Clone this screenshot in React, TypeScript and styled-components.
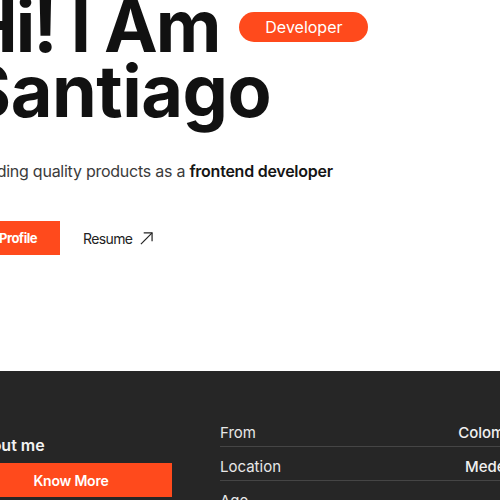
import * as React from "react";
import styled, { createGlobalStyle } from "styled-components";

const GlobalStyle = createGlobalStyle`
  html, body {
    margin: 0;
    padding: 0;
    background: #ffffff;
    overflow: hidden;
  }
  body {
    font-family: "Inter", "Noto Sans", sans-serif;
    color: #111111;
  }
`;

const ORANGE = "#ff4a1c";

// the screenshot is a crop of a wider page, so the page starts left of and above the window
const Page = styled.div`
  width: 560px;
  margin: -7px 0 0 -30px;
`;

const Hero = styled.section`
  display: flex;
  flex-direction: column;
  padding-bottom: 116px;
`;

const TitleRow = styled.div`
  display: flex;
  align-items: center;
  gap: 20px;
`;

const Title = styled.h1<{ $tight?: boolean }>`
  margin: 0 0 0 -6px;
  font-size: 72px;
  line-height: 65px;
  font-weight: 700;
  letter-spacing: ${(p) => (p.$tight ? "-2px" : "-0.5px")};
  color: #111111;
`;

const Badge = styled.span`
  display: inline-flex;
  align-items: center;
  justify-content: center;
  height: 30px;
  width: 129px;
  border-radius: 999px;
  background: ${ORANGE};
  color: #ffffff;
  font-size: 16px;
  font-weight: 400;
  margin-top: 2px;
`;

const Subtitle = styled.p`
  margin: 36px 0 0;
  font-size: 16px;
  line-height: 24px;
  letter-spacing: -0.25px;
  color: #3b3b3b;

  strong {
    font-weight: 600;
    color: #151515;
  }
`;

const Actions = styled.div`
  display: flex;
  align-items: center;
  gap: 23px;
  margin-top: 38px;
`;

const PrimaryButton = styled.button<{ $wide?: boolean }>`
  height: 34px;
  padding: ${(p) => (p.$wide ? "0" : "0 23px 0 29px")};
  border: none;
  background: ${ORANGE};
  color: #ffffff;
  font-family: inherit;
  font-size: ${(p) => (p.$wide ? "14px" : "13px")};
  font-weight: ${(p) => (p.$wide ? 600 : 700)};
  letter-spacing: ${(p) => (p.$wide ? "-0.2px" : "-0.5px")};
  cursor: pointer;
  width: ${(p) => (p.$wide ? "202px" : "auto")};
`;

const LinkButton = styled.a`
  display: inline-flex;
  align-items: center;
  gap: 8px;
  font-size: 14px;
  letter-spacing: -0.6px;
  color: #222222;
  text-decoration: none;
`;

const About = styled.section`
  background: #262626;
  display: grid;
  grid-template-columns: 202px 306px;
  column-gap: 48px;
  padding: 42px 0 40px;
`;

const AboutLeft = styled.div`
  display: flex;
  flex-direction: column;
  gap: 7px;
  padding-top: 21px;
`;

const AboutTitle = styled.h2`
  margin: 0;
  font-size: 16px;
  line-height: 22px;
  font-weight: 600;
  color: #f2f2f2;
`;

const InfoList = styled.div`
  display: flex;
  flex-direction: column;
`;

const InfoRow = styled.div`
  display: flex;
  justify-content: space-between;
  padding: 10px 0 3px;
  line-height: 20px;
  font-size: 15px;
  border-bottom: 1px solid #454545;
  color: #e8e8e8;
`;

const InfoValue = styled.span`
  font-weight: 500;
  color: #f0f0f0;
`;

const ArrowIcon = () => (
  <svg width="13" height="13" viewBox="0 0 14 14" fill="none" stroke="#222" strokeWidth="1.3">
    <path d="M1 13 13 1" />
    <path d="M4 1h9v9" />
  </svg>
);

const info = [
  { label: "From", value: "Colombia" },
  { label: "Location", value: "Medellín" },
  { label: "Age", value: "24" },
];

export default function App() {
  return (
    <>
      <GlobalStyle />
      <Page>
        <Hero>
          <TitleRow>
            <Title $tight>Hi! I Am</Title>
            <Badge>Developer</Badge>
          </TitleRow>
          <Title>Santiago</Title>
          <Subtitle>
            Building quality products as a <strong>frontend developer</strong>
          </Subtitle>
          <Actions>
            <PrimaryButton>Profile</PrimaryButton>
            <LinkButton href="#">
              Resume <ArrowIcon />
            </LinkButton>
          </Actions>
        </Hero>
        <About>
          <AboutLeft>
            <AboutTitle>About me</AboutTitle>
            <PrimaryButton $wide>Know More</PrimaryButton>
          </AboutLeft>
          <InfoList>
            {info.map((row) => (
              <InfoRow key={row.label}>
                <span>{row.label}</span>
                <InfoValue>{row.value}</InfoValue>
              </InfoRow>
            ))}
          </InfoList>
        </About>
      </Page>
    </>
  );
}
